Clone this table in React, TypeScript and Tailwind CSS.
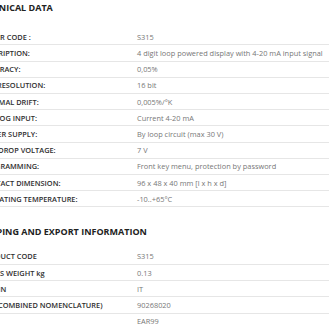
import { type ReactElement } from 'react';

interface SpecRow {
    readonly label: string;
    readonly value: string;
}

const technical: SpecRow[] = [
    { label: 'ORDER CODE :', value: 'S315' },
    { label: 'DESCRIPTION:', value: '4 digit loop powered display with 4-20 mA input signal' },
    { label: 'ACCURACY:', value: '0,05%' },
    { label: 'ADC RESOLUTION:', value: '16 bit' },
    { label: 'THERMAL DRIFT:', value: '0,005%/°K' },
    { label: 'ANALOG INPUT:', value: 'Current 4-20 mA' },
    { label: 'POWER SUPPLY:', value: 'By loop circuit (max 30 V)' },
    { label: 'MAX DROP VOLTAGE:', value: '7 V' },
    { label: 'PROGRAMMING:', value: 'Front key menu, protection by password' },
    { label: 'CONTACT DIMENSION:', value: '96 x 48 x 40 mm [l x h x d]' },
    { label: 'OPERATING TEMPERATURE:', value: '-10..+65°C' },
];

const shipping: SpecRow[] = [
    { label: 'PRODUCT CODE', value: 'S315' },
    { label: 'GROSS WEIGHT kg', value: '0.13' },
    { label: 'ORIGIN', value: 'IT' },
    { label: 'HTS (COMBINED NOMENCLATURE)', value: '90268020' },
    { label: 'ECCN', value: 'EAR99' },
];

function SpecTable({ rows }: { readonly rows: SpecRow[] }): ReactElement {
    return (
        <div className="flex flex-col">
            {rows.map((row) => (
                <div
                    key={row.label}
                    className="flex h-[16.2px] items-center border-b border-[#e6e6e6] text-[7.4px] leading-[10px]"
                >
                    <span className="w-[157px] shrink-0 whitespace-nowrap font-semibold text-[#2e2e2e]">
                        {row.label}
                    </span>
                    <span className="whitespace-nowrap text-[#777]">{row.value}</span>
                </div>
            ))}
        </div>
    );
}

export default function App(): ReactElement {
    return (
        <div className="h-[329px] w-[329px] overflow-hidden bg-white font-['Open_Sans',sans-serif]">
            <div className="ml-[-20px] w-[349px]">
                <h2 className="ml-[-4px] h-[15px] text-[9px] leading-[15px] font-bold whitespace-nowrap text-[#222]">
                    TECHNICAL DATA
                </h2>
                <div className="mt-[14.3px]">
                    <SpecTable rows={technical} />
                </div>
                <h2 className="mt-[16.5px] ml-[-4px] h-[15px] text-[9px] leading-[15px] font-bold whitespace-nowrap text-[#222]">
                    SHIPPING AND EXPORT INFORMATION
                </h2>
                <div className="mt-[10px]">
                    <SpecTable rows={shipping} />
                </div>
            </div>
        </div>
    );
}
